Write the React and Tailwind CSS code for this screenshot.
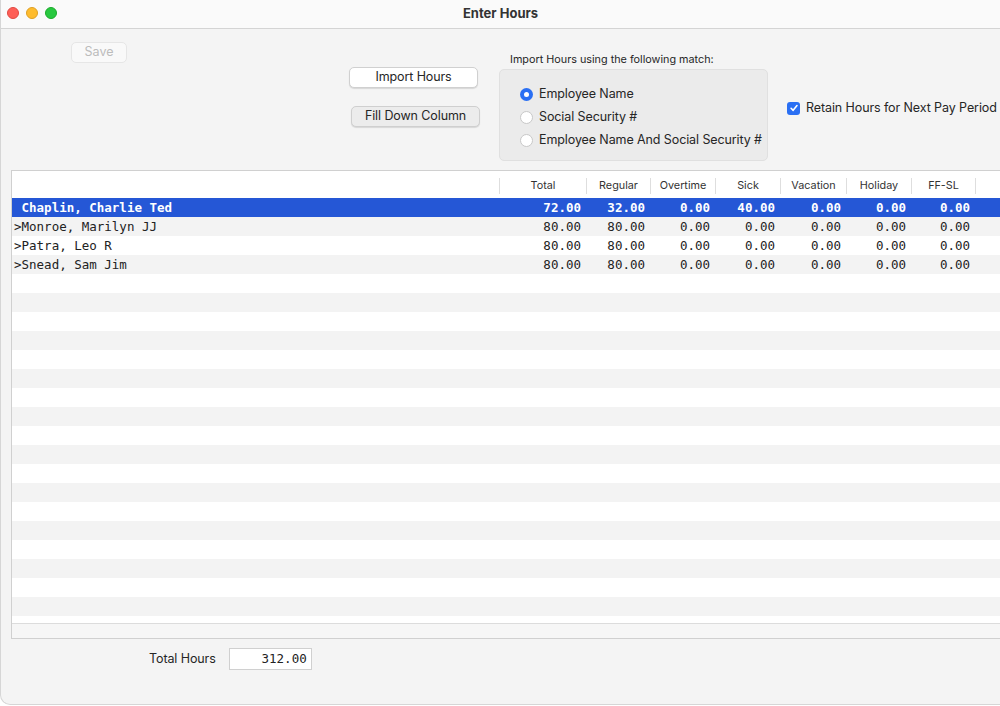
const rows = [
  { name: ' Chaplin, Charlie Ted', vals: ['72.00', '32.00', '0.00', '40.00', '0.00', '0.00', '0.00'], sel: true },
  { name: '>Monroe, Marilyn JJ', vals: ['80.00', '80.00', '0.00', '0.00', '0.00', '0.00', '0.00'] },
  { name: '>Patra, Leo R', vals: ['80.00', '80.00', '0.00', '0.00', '0.00', '0.00', '0.00'] },
  { name: '>Snead, Sam Jim', vals: ['80.00', '80.00', '0.00', '0.00', '0.00', '0.00', '0.00'] },
];

const cols = [
  { label: 'Total', w: 'w-[87px]' },
  { label: 'Regular', w: 'w-[64px]' },
  { label: 'Overtime', w: 'w-[65px]' },
  { label: 'Sick', w: 'w-[65px]' },
  { label: 'Vacation', w: 'w-[66px]' },
  { label: 'Holiday', w: 'w-[65px]' },
  { label: 'FF-SL', w: 'w-[64px]' },
];

const mono = { fontFamily: '"DejaVu Sans Mono", "Liberation Mono", monospace' };

function Radio({ checked, label }) {
  return (
    <div className="flex items-center h-[23px] gap-[6px]">
      {checked ? (
        <div className="w-[13px] h-[13px] shrink-0 rounded-full bg-[#2a6ff3] flex items-center justify-center">
          <div className="w-[5px] h-[5px] rounded-full bg-white" />
        </div>
      ) : (
        <div className="w-[13px] h-[13px] shrink-0 rounded-full bg-white border border-[#c8c8c8]" />
      )}
      <span className="text-[12.5px] tracking-[-0.1px] text-[#262626] whitespace-nowrap">{label}</span>
    </div>
  );
}

export default function App() {
  const fillers = Array.from({ length: 19 });
  return (
    <div className="w-[1000px] h-[706px] bg-white" style={{ fontFamily: 'Inter, "Noto Sans", sans-serif' }}>
      <div className="w-[1000px] h-[705px] bg-[#f4f4f4] rounded-bl-[10px] border-l border-b border-[#d6d6d6] overflow-hidden flex flex-col">
        {/* title bar */}
        <div className="h-[29px] shrink-0 bg-[#fafafa] border-b border-[#d4d4d4] relative flex items-center justify-center">
          <div className="absolute left-[6px] top-[7px] flex gap-[7px]">
            <div className="w-[12px] h-[12px] rounded-full bg-[#fe5f57] border border-[#e14942]" />
            <div className="w-[12px] h-[12px] rounded-full bg-[#febc2e] border border-[#dfa023]" />
            <div className="w-[12px] h-[12px] rounded-full bg-[#28c840] border border-[#1aab29]" />
          </div>
          <span className="text-[13px] font-bold text-[#333]">Enter Hours</span>
        </div>

        {/* controls */}
        <div className="h-[141px] shrink-0 pt-[1px] flex items-start">
          <button className="shrink-0 ml-[70px] mt-[12px] w-[56px] h-[21px] rounded-[5px] bg-[#f9f9f9] border border-[#e6e6e6] text-[12.5px] text-[#bcbcbc] leading-none">
            Save
          </button>
          <div className="shrink-0 ml-[222px] mt-[37px] flex flex-col items-start">
            <button className="w-[129px] h-[21px] rounded-[5px] bg-white border border-[#d0d0d0] shadow-[0_1px_1px_rgba(0,0,0,0.12)] text-[12.5px] tracking-[-0.1px] text-[#262626] leading-none">
              Import Hours
            </button>
            <button className="ml-[2px] mt-[18px] w-[129px] h-[21px] rounded-[5px] bg-[#ececec] border border-[#cfcfcf] shadow-[0_1px_1px_rgba(0,0,0,0.12)] text-[12.5px] tracking-[-0.1px] text-[#262626] leading-none">
              Fill Down Column
            </button>
          </div>
          <div className="shrink-0 ml-[19px] mt-[23px] flex flex-col">
            <div className="pl-[11px] text-[10.8px] leading-[14px] text-[#262626] whitespace-nowrap">Import Hours using the following match:</div>
            <div className="mt-[2px] w-[269px] h-[92px] rounded-[5px] bg-[#ebebeb] border border-[#e0e0e0] pl-[20px] pt-[13px]">
              <Radio checked label="Employee Name" />
              <Radio label="Social Security #" />
              <Radio label="Employee Name And Social Security #" />
            </div>
          </div>
          <div className="shrink-0 ml-[19px] mt-[70px] h-[16px] flex items-center gap-[6px]">
            <div className="w-[13px] h-[13px] shrink-0 rounded-[3px] bg-[#2a6ff3] flex items-center justify-center">
              <svg viewBox="0 0 12 12" className="w-[10px] h-[10px]" fill="none" stroke="white" strokeWidth="1.9" strokeLinecap="round" strokeLinejoin="round">
                <path d="M2.5 6.3 L5 8.8 L9.6 3" />
              </svg>
            </div>
            <span className="text-[12.5px] tracking-[-0.1px] text-[#262626] whitespace-nowrap">Retain Hours for Next Pay Period</span>
          </div>
        </div>

        {/* table */}
        <div className="ml-[10px] h-[469px] shrink-0 bg-white border-t border-l border-b border-[#d0d0d0] flex flex-col overflow-hidden">
          <div className="h-[27px] shrink-0 pt-[3px] flex items-center bg-white">
            <div className="w-[487px] shrink-0" />
            {cols.map((c) => (
              <div key={c.label} className={`${c.w} shrink-0 h-[16px] border-l border-[#dedede] flex items-center justify-center text-[10.8px] text-[#333]`}>
                {c.label}
              </div>
            ))}
            <div className="flex-1 h-[16px] border-l border-[#dedede]" />
          </div>
          <div className="h-[425px] shrink-0 overflow-hidden">
            {rows.map((r, i) => (
              <div
                key={r.name}
                className={`h-[19px] pt-[1px] flex items-center text-[12.5px] ${r.sel ? 'bg-[#2557d6] text-white font-bold' : i % 2 ? 'bg-[#f3f3f3] text-[#222]' : 'bg-white text-[#222]'}`}
                style={mono}
              >
                <div className="w-[487px] shrink-0 pl-[2px] whitespace-pre">{r.name}</div>
                {r.vals.map((v, j) => (
                  <div key={j} className={`${cols[j].w} shrink-0 text-right pr-[5px]`}>{v}</div>
                ))}
              </div>
            ))}
            {fillers.map((_, k) => (
              <div key={k} className={`h-[19px] ${(k + 4) % 2 ? 'bg-[#f3f3f3]' : 'bg-white'}`} />
            ))}
          </div>
          <div className="flex-1 bg-[#f6f6f6] border-t border-[#dcdcdc]" />
        </div>

        {/* footer */}
        <div className="flex items-center mt-[9px]">
          <span className="ml-[148px] text-[12.5px] tracking-[-0.1px] text-[#262626]">Total Hours</span>
          <div className="ml-[13px] w-[83px] h-[22px] bg-white border border-[#d0d0d0] flex items-center justify-end pr-[4px] text-[12.5px] text-[#222]" style={mono}>
            312.00
          </div>
        </div>
      </div>
    </div>
  );
}
